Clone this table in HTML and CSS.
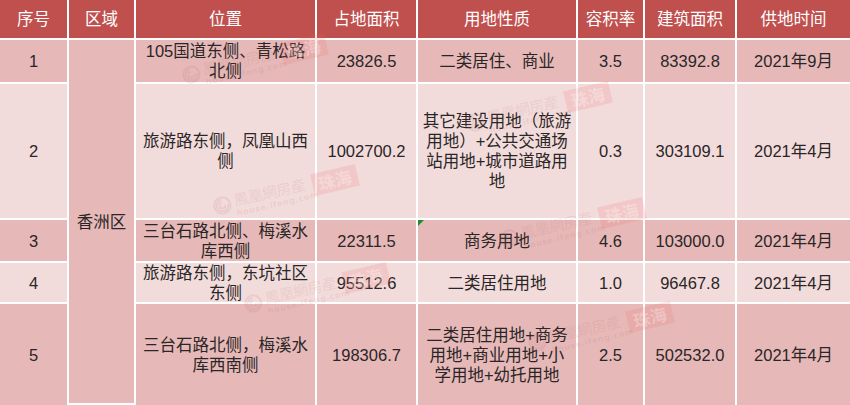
FILE: index.html
```html
<!DOCTYPE html>
<html lang="zh-CN">
<head>
<meta charset="utf-8">
<title>香洲区供地计划</title>
<link rel="stylesheet" href="styles.css">
</head>
<body>
<div class="wrap">
  <div class="sheet">
    <div class="cell h">序号</div>
    <div class="cell h">区域</div>
    <div class="cell h">位置</div>
    <div class="cell h">占地面积</div>
    <div class="cell h">用地性质</div>
    <div class="cell h">容积率</div>
    <div class="cell h">建筑面积</div>
    <div class="cell h">供地时间</div>

    <div class="cell odd">1</div>
    <div class="cell region">香洲区</div>
    <div class="cell odd">105国道东侧、青松路<br>北侧</div>
    <div class="cell odd">23826.5</div>
    <div class="cell odd">二类居住、商业</div>
    <div class="cell odd">3.5</div>
    <div class="cell odd">83392.8</div>
    <div class="cell odd">2021年9月</div>

    <div class="cell even">2</div>
    <div class="cell even">旅游路东侧，凤凰山西<br>侧</div>
    <div class="cell even">1002700.2</div>
    <div class="cell even">其它建设用地（旅游<br>用地）+公共交通场<br>站用地+城市道路用<br>地</div>
    <div class="cell even">0.3</div>
    <div class="cell even">303109.1</div>
    <div class="cell even">2021年4月</div>

    <div class="cell odd">3</div>
    <div class="cell odd">三台石路北侧、梅溪水<br>库西侧</div>
    <div class="cell odd">22311.5</div>
    <div class="cell odd note">商务用地<span class="mark"></span></div>
    <div class="cell odd">4.6</div>
    <div class="cell odd">103000.0</div>
    <div class="cell odd">2021年4月</div>

    <div class="cell even">4</div>
    <div class="cell even">旅游路东侧，东坑社区<br>东侧</div>
    <div class="cell even">95512.6</div>
    <div class="cell even">二类居住用地</div>
    <div class="cell even">1.0</div>
    <div class="cell even">96467.8</div>
    <div class="cell even">2021年4月</div>

    <div class="cell odd">5</div>
    <div class="cell odd">三台石路北侧，梅溪水<br>库西南侧</div>
    <div class="cell odd">198306.7</div>
    <div class="cell odd">二类居住用地+商务<br>用地+商业用地+小<br>学用地+幼托用地</div>
    <div class="cell odd">2.5</div>
    <div class="cell odd">502532.0</div>
    <div class="cell odd">2021年4月</div>
  </div>

  <div class="marks">
    <div class="wm w1"><svg class="logo" viewBox="0 0 20 20"><circle cx="10" cy="10" r="8.5" fill="none" stroke="currentColor" stroke-width="2"/><path d="M10 4a6 6 0 1 0 6 6M10 7a3 3 0 1 0 3 3" fill="none" stroke="currentColor" stroke-width="1.8"/></svg><span class="brand">鳳凰網房產<i>house.ifeng.com</i></span><b class="city">珠海</b></div>
    <div class="wm w3"><svg class="logo" viewBox="0 0 20 20"><circle cx="10" cy="10" r="8.5" fill="none" stroke="currentColor" stroke-width="2"/><path d="M10 4a6 6 0 1 0 6 6M10 7a3 3 0 1 0 3 3" fill="none" stroke="currentColor" stroke-width="1.8"/></svg><span class="brand">鳳凰網房產<i>house.ifeng.com</i></span><b class="city">珠海</b></div>
    <div class="wm w7"><svg class="logo" viewBox="0 0 20 20"><circle cx="10" cy="10" r="8.5" fill="none" stroke="currentColor" stroke-width="2"/><path d="M10 4a6 6 0 1 0 6 6M10 7a3 3 0 1 0 3 3" fill="none" stroke="currentColor" stroke-width="1.8"/></svg><span class="brand">鳳凰網房產<i>house.ifeng.com</i></span><b class="city">珠海</b></div>
    <div class="wm w8"><svg class="logo" viewBox="0 0 20 20"><circle cx="10" cy="10" r="8.5" fill="none" stroke="currentColor" stroke-width="2"/><path d="M10 4a6 6 0 1 0 6 6M10 7a3 3 0 1 0 3 3" fill="none" stroke="currentColor" stroke-width="1.8"/></svg><span class="brand">鳳凰網房產<i>house.ifeng.com</i></span><b class="city">珠海</b></div>
    <div class="wm w9"><svg class="logo" viewBox="0 0 20 20"><circle cx="10" cy="10" r="8.5" fill="none" stroke="currentColor" stroke-width="2"/><path d="M10 4a6 6 0 1 0 6 6M10 7a3 3 0 1 0 3 3" fill="none" stroke="currentColor" stroke-width="1.8"/></svg><span class="brand">鳳凰網房產<i>house.ifeng.com</i></span><b class="city">珠海</b></div>
    <div class="wm w10"><svg class="logo" viewBox="0 0 20 20"><circle cx="10" cy="10" r="8.5" fill="none" stroke="currentColor" stroke-width="2"/><path d="M10 4a6 6 0 1 0 6 6M10 7a3 3 0 1 0 3 3" fill="none" stroke="currentColor" stroke-width="1.8"/></svg><span class="brand">鳳凰網房產<i>house.ifeng.com</i></span><b class="city">珠海</b></div>
  </div>
</div>
</body>
</html>
```

FILE: styles.css
```css
html, body {
  margin: 0;
  padding: 0;
  background: #ffffff;
}

body {
  width: 850px;
  height: 405px;
  overflow: hidden;
  font-family: "Liberation Sans", "Noto Sans CJK SC", sans-serif;
  font-size: 16.5px;
  color: #2a2627;
}

.wrap {
  position: relative;
  width: 850px;
  height: 405px;
  overflow: hidden;
}

.sheet {
  display: grid;
  grid-template-columns: 67px 65px 179px 99px 158px 65px 90px 113px;
  grid-template-rows: 38px 42px 134px 41px 39px 101px;
  gap: 2px;
  background: #ffffff;
}

.cell {
  display: flex;
  align-items: center;
  justify-content: center;
  text-align: center;
  line-height: 20px;
  white-space: nowrap;
}

.h {
  background: #c0504d;
  color: #ffffff;
  font-size: 16.5px;
}

.odd {
  background: #e6b9b8;
}

.even {
  background: #f2dcdb;
}

.region {
  grid-column: 2;
  grid-row: 2 / 7;
  margin-bottom: 2px;
  background: #e6b9b8;
}

.note {
  position: relative;
}

.mark {
  position: absolute;
  left: 0;
  top: 0;
  width: 0;
  height: 0;
  border-top: 6px solid #1d8c2a;
  border-right: 6px solid transparent;
}

/* faint watermark overlay */
.marks {
  position: absolute;
  inset: 0;
  pointer-events: none;
}

.wm {
  position: absolute;
  width: 150px;
  height: 30px;
  transform-origin: 125px 11px;
  transform: rotate(-13deg);
  color: rgba(180, 100, 100, 0.14);
}

.logo {
  position: absolute;
  left: 0;
  top: 1px;
  width: 19px;
  height: 19px;
}

.brand {
  position: absolute;
  left: 22px;
  top: -2px;
  font-family: "Noto Sans CJK TC", sans-serif;
  font-size: 15px;
  line-height: 19px;
  letter-spacing: -0.5px;
  color: rgba(180, 100, 100, 0.14);
}

.brand i {
  display: block;
  font-style: normal;
  font-family: "DejaVu Sans", sans-serif;
  font-size: 8px;
  line-height: 9px;
  letter-spacing: 0.6px;
  font-weight: bold;
}

.city {
  position: absolute;
  left: 102px;
  top: 0;
  width: 46px;
  height: 22px;
  line-height: 22px;
  text-align: center;
  font-family: "Noto Sans CJK TC", sans-serif;
  font-size: 17px;
  font-weight: bold;
  color: rgba(255, 255, 255, 0.3);
  background: rgba(235, 100, 100, 0.16);
}

.w1 { left: 179px; top: 38px; }
.w3 { left: 210px; top: 169px; }
.w7 { left: 463px; top: 86px; }
.w8 { left: 497px; top: 202px; }
.w9 { left: 525px; top: 306px; }
.w10 { left: 241px; top: 267px; }
```
